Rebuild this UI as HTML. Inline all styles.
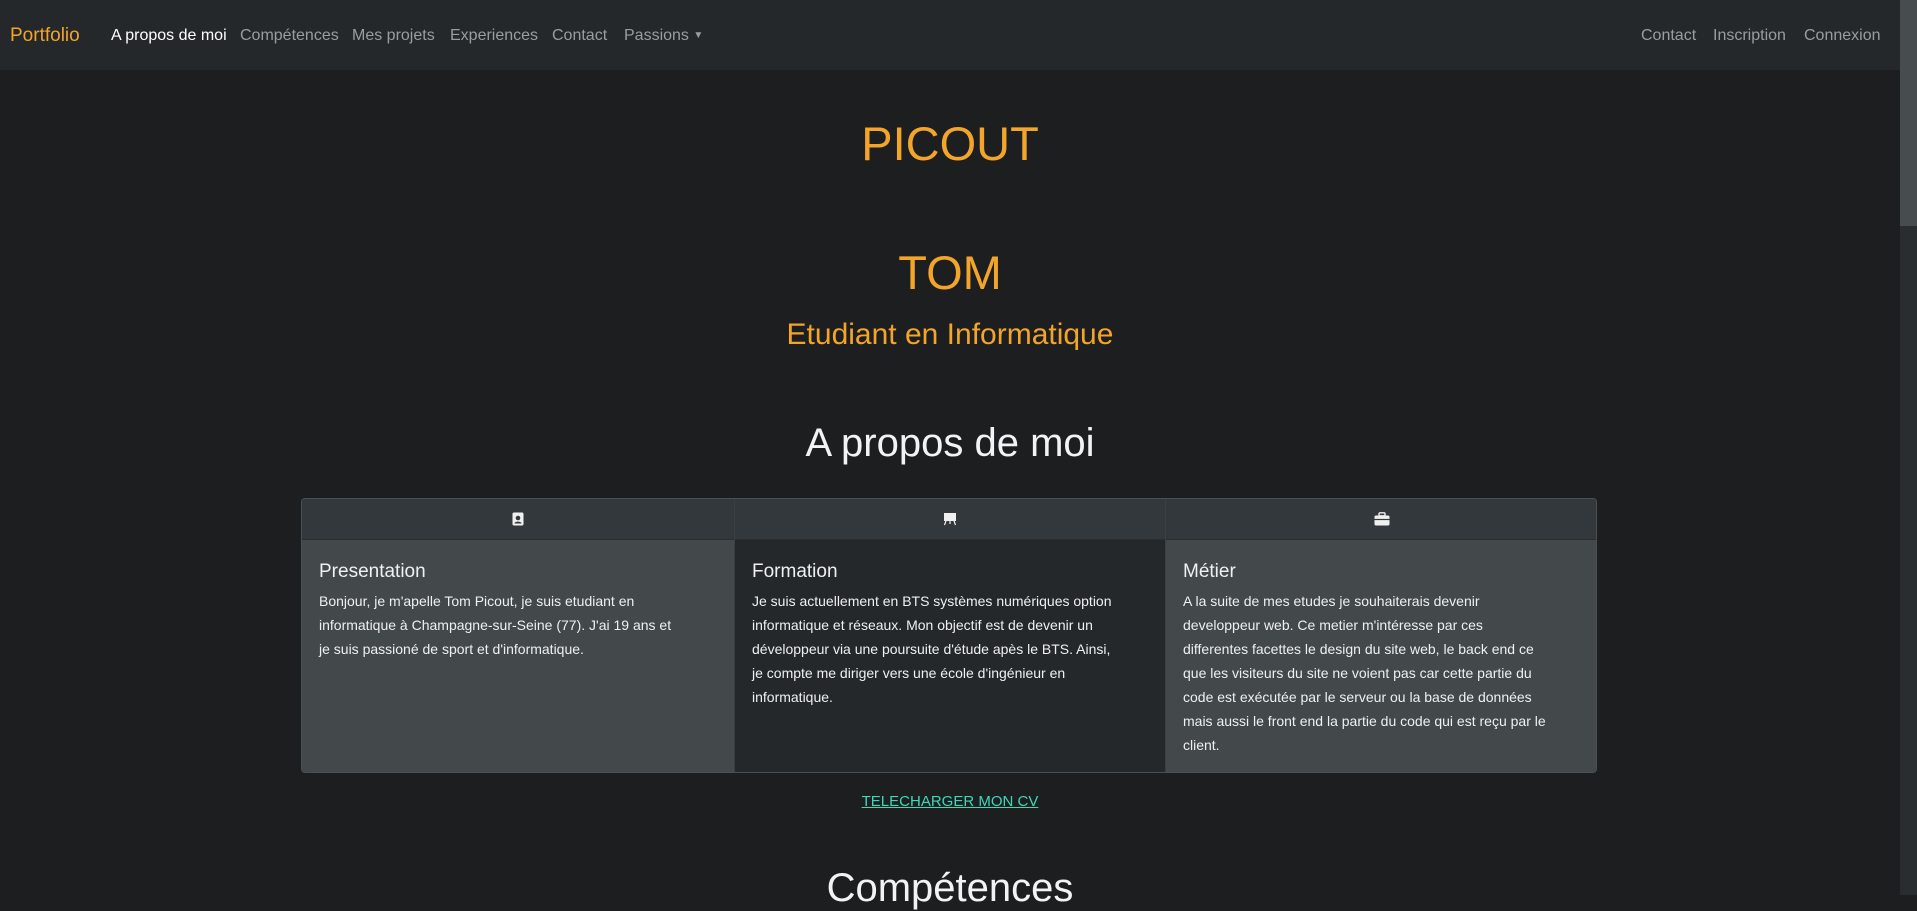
<!DOCTYPE html>
<html><head><meta charset="utf-8">
<style>
*{margin:0;padding:0;box-sizing:border-box}
html,body{width:1917px;height:895px;overflow:hidden;background:#1c1e20;font-family:"Liberation Sans",sans-serif}
.nav{position:absolute;left:0;top:0;width:1900px;height:70px;background:#24282b}
.nav span{position:absolute;top:27px;font-size:16px;color:#9a9d9f;white-space:nowrap}
.brand{color:#f3a42b!important;font-size:19px!important;top:25px!important}
.sb{position:absolute;left:1900px;top:0;width:17px;height:895px;background:#2a2d30}
.sb i{position:absolute;left:0;top:0;width:17px;height:226px;background:#474c4f}
.c{position:absolute;left:0;width:1900px;text-align:center;white-space:nowrap}
.card{position:absolute;left:301px;top:498px;width:1296px;height:275px;border:1px solid #4a4f53;border-radius:4px;overflow:hidden}
.col{position:absolute;top:0;width:432px;height:275px}
.hd{height:41px;background:#33383c;border-bottom:1px solid #2a2e31;display:flex;align-items:center;justify-content:center}
.bd{padding:21px 0 0 17px;color:#eef0f1}
.bd h5{font-size:19px;font-weight:normal;margin-bottom:6px}
.bd p{font-size:14px;line-height:24px;white-space:nowrap}
</style></head><body>
<div class="nav">
<span class="brand" style="left:10px">Portfolio</span>
<span style="left:111px;color:#fff">A propos de moi</span>
<span style="left:240px">Compétences</span>
<span style="left:352px">Mes projets</span>
<span style="left:450px">Experiences</span>
<span style="left:552px">Contact</span>
<span style="left:624px">Passions <small style="font-size:10px;position:relative;top:-2px">▼</small></span>
<span style="left:1641px">Contact</span>
<span style="left:1713px">Inscription</span>
<span style="left:1804px">Connexion</span>
</div>
<div class="sb"><i></i></div>
<div class="c" style="top:116px;font-size:47px;color:#f3a42b">PICOUT</div>
<div class="c" style="top:245px;font-size:47px;color:#f3a42b">TOM</div>
<div class="c" style="top:318px;font-size:30px;color:#f3a42b">Etudiant en Informatique</div>
<div class="c" style="top:421px;font-size:40px;color:#f2f3f4">A propos de moi</div>
<div class="card">
<div class="col" style="left:0;background:#43484b">
<div class="hd"><svg width="12" height="14" viewBox="0 0 12 14"><rect x="0.5" y="0.5" width="11" height="13" rx="1.5" fill="#f0f0f0"/><circle cx="6" cy="6" r="2.3" fill="#33383c"/><path d="M2.5 11.5c0-2.5 7-2.5 7 0z" fill="#33383c"/></svg></div>
<div class="bd"><h5>Presentation</h5><p>Bonjour, je m'apelle Tom Picout, je suis etudiant en<br>informatique à Champagne-sur-Seine (77). J'ai 19 ans et<br>je suis passioné de sport et d'informatique.</p></div>
</div>
<div class="col" style="left:432px;background:#24282b;border-left:1px solid #3a3f43;border-right:1px solid #3a3f43">
<div class="hd"><svg width="14" height="14" viewBox="0 0 14 14"><rect x="1" y="1" width="12" height="8" fill="#f0f0f0"/><path d="M3 9l-1.5 4M11 9l1.5 4M7 9v3" stroke="#f0f0f0" stroke-width="1.2"/></svg></div>
<div class="bd"><h5>Formation</h5><p>Je suis actuellement en BTS systèmes numériques option<br>informatique et réseaux. Mon objectif est de devenir un<br>développeur via une poursuite d'étude apès le BTS. Ainsi,<br>je compte me diriger vers une école d'ingénieur en<br>informatique.</p></div>
</div>
<div class="col" style="left:864px;width:432px;background:#43484b">
<div class="hd"><svg width="16" height="14" viewBox="0 0 16 14"><rect x="5" y="0.8" width="6" height="3" rx="1" fill="none" stroke="#f0f0f0" stroke-width="1.4"/><rect x="0.5" y="3.5" width="15" height="10" rx="1.5" fill="#f0f0f0"/><path d="M0.5 7.5h15" stroke="#33383c" stroke-width="1.2"/></svg></div>
<div class="bd"><h5>Métier</h5><p>A la suite de mes etudes je souhaiterais devenir<br>developpeur web. Ce metier m'intéresse par ces<br>differentes facettes le design du site web, le back end ce<br>que les visiteurs du site ne voient pas car cette partie du<br>code est exécutée par le serveur ou la base de données<br>mais aussi le front end la partie du code qui est reçu par le<br>client.</p></div>
</div>
</div>
<div class="c" style="top:793px;font-size:15px;color:#3fd8b8;text-decoration:underline">TELECHARGER MON CV</div>
<div class="c" style="top:866px;font-size:40px;color:#f2f3f4">Compétences</div>
</body></html>
